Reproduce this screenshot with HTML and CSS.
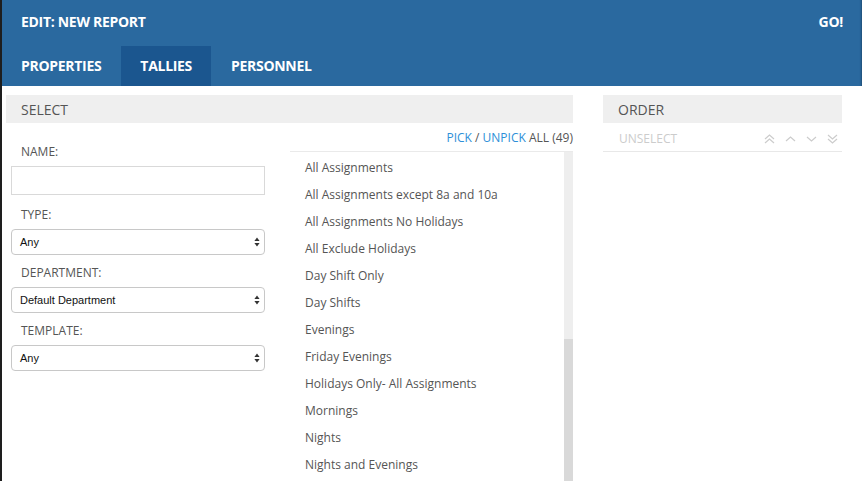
FILE: index.html
```html
<!DOCTYPE html>
<html>
<head>
<meta charset="utf-8">
<link rel="stylesheet" href="styles.css">
</head>
<body>
<div class="app">
  <header class="topbar">
    <div class="titlerow">
      <span class="title">EDIT: NEW REPORT</span>
      <span class="go">GO!</span>
    </div>
    <nav class="tabs">
      <span class="tab">PROPERTIES</span>
      <span class="tab active">TALLIES</span>
      <span class="tab">PERSONNEL</span>
    </nav>
  </header>
  <main class="content">
    <section class="panel select-panel">
      <div class="panel-head">SELECT</div>
      <div class="select-body">
        <div class="filters">
          <label class="flabel first">NAME:</label>
          <div class="textbox"></div>
          <label class="flabel after-input">TYPE:</label>
          <div class="sel"><span>Any</span><svg class="updown" width="6" height="10" viewBox="0 0 6 10"><path d="M3 0.5 L5.6 4 H0.4 Z M3 9.5 L5.6 6 H0.4 Z" fill="#333"/></svg></div>
          <label class="flabel">DEPARTMENT:</label>
          <div class="sel"><span>Default Department</span><svg class="updown" width="6" height="10" viewBox="0 0 6 10"><path d="M3 0.5 L5.6 4 H0.4 Z M3 9.5 L5.6 6 H0.4 Z" fill="#333"/></svg></div>
          <label class="flabel">TEMPLATE:</label>
          <div class="sel"><span>Any</span><svg class="updown" width="6" height="10" viewBox="0 0 6 10"><path d="M3 0.5 L5.6 4 H0.4 Z M3 9.5 L5.6 6 H0.4 Z" fill="#333"/></svg></div>
        </div>
        <div class="picker">
          <div class="pickrow"><a class="lnk">PICK</a>&nbsp;/&nbsp;<a class="lnk">UNPICK</a>&nbsp;ALL (49)</div>
          <div class="listwrap">
            <ul class="items">
              <li>All Assignments</li>
              <li>All Assignments except 8a and 10a</li>
              <li>All Assignments No Holidays</li>
              <li>All Exclude Holidays</li>
              <li>Day Shift Only</li>
              <li>Day Shifts</li>
              <li>Evenings</li>
              <li>Friday Evenings</li>
              <li>Holidays Only- All Assignments</li>
              <li>Mornings</li>
              <li>Nights</li>
              <li>Nights and Evenings</li>
            </ul>
            <div class="scrollbar"><div class="thumb"></div></div>
          </div>
        </div>
      </div>
    </section>
    <section class="panel order-panel">
      <div class="panel-head">ORDER</div>
      <div class="orderbar">
        <span class="unselect">UNSELECT</span>
        <span class="arrows">
          <svg width="11" height="10" viewBox="0 0 11 10"><path d="M1 5 L5.5 1 L10 5 M1 9 L5.5 5 L10 9" fill="none" stroke="#ccc" stroke-width="1.2"/></svg>
          <svg width="11" height="10" viewBox="0 0 11 10"><path d="M1 7 L5.5 3 L10 7" fill="none" stroke="#ccc" stroke-width="1.2"/></svg>
          <svg width="11" height="10" viewBox="0 0 11 10"><path d="M1 3 L5.5 7 L10 3" fill="none" stroke="#ccc" stroke-width="1.2"/></svg>
          <svg width="11" height="10" viewBox="0 0 11 10"><path d="M1 1 L5.5 5 L10 1 M1 5 L5.5 9 L10 5" fill="none" stroke="#ccc" stroke-width="1.2"/></svg>
        </span>
      </div>
    </section>
  </main>
</div>
</body>
</html>
```
FILE: styles.css
```css
* { box-sizing: border-box; }
html, body { margin: 0; padding: 0; }
body {
  width: 862px;
  height: 481px;
  overflow: hidden;
  background: #fff;
  font-family: "Open Sans", "DejaVu Sans", sans-serif;
}
.app {
  height: 481px;
  border-left: 2px solid #1e1e1e;
  overflow: hidden;
}
.topbar {
  background: #2a699f;
  color: #fff;
  font-weight: 700;
  font-size: 14px;
  box-shadow: inset -3px 0 2px -2px rgba(0,0,0,0.25);
}
.titlerow {
  height: 46px;
  display: flex;
  align-items: center;
  justify-content: space-between;
  padding: 0 19px 4px 19px;
  letter-spacing: -0.3px;
}
.tabs {
  display: flex;
  height: 40px;
}
.tab {
  display: flex;
  align-items: center;
  padding: 0 19px 2px 19px;
  letter-spacing: -0.3px;
}
.tab.active { background: #1b568f; }
.tabs .tab:first-child { padding-right: 20px; }
.tabs .tab:last-child { padding-left: 20px; }

.content {
  display: flex;
  padding: 9px 20px 0 4px;
  gap: 30px;
}
.panel-head {
  background: #efefef;
  height: 28px;
  display: flex;
  align-items: center;
  padding-left: 15px;
  font-size: 14px;
  color: #555;
}
.select-panel { width: 567px; }
.order-panel { width: 239px; }

.select-body {
  display: flex;
  gap: 25px;
  padding-left: 5px;
}
.filters {
  width: 254px;
  padding-top: 21px;
  display: flex;
  flex-direction: column;
}
.flabel {
  display: block;
  font-size: 12px;
  line-height: 16px;
  color: #555;
  padding-left: 10px;
  margin: 10px 0 6px;
}
.flabel.first { margin-top: 0; }
.flabel.after-input { margin-top: 12px; }
.textbox {
  height: 29px;
  border: 1px solid #d9d9d9;
  background: #fff;
}
.sel {
  height: 26px;
  border: 1px solid #c8c8c8;
  border-radius: 4px;
  display: flex;
  align-items: center;
  justify-content: space-between;
  padding: 0 4px 0 8px;
  font-family: "Liberation Sans", Arial, sans-serif;
  font-size: 11px;
  color: #111;
  background: #fff;
}
.updown { display: block; }

.picker { flex: 1; }
.pickrow {
  height: 28px;
  display: flex;
  align-items: center;
  justify-content: flex-end;
  font-size: 12px;
  color: #555;
}
.lnk { color: #2d8fd8; }
.listwrap {
  border-top: 1px solid #eaeaea;
  display: flex;
  height: 340px;
  overflow: hidden;
}
.items {
  list-style: none;
  margin: 0;
  padding: 2px 0 0 15px;
  flex: 1;
}
.items li {
  height: 27px;
  display: flex;
  align-items: center;
  font-size: 12px;
  color: #555;
}
.scrollbar {
  width: 9px;
  background: #eeeeee;
  padding-top: 187px;
}
.thumb {
  height: 200px;
  background: #d9d9d9;
}

.orderbar {
  height: 29px;
  border-bottom: 1px solid #e8e8e8;
  display: flex;
  align-items: center;
  justify-content: space-between;
  padding: 3px 4px 0 16px;
  font-size: 12px;
  color: #ccc;
}
.arrows {
  display: flex;
  gap: 10px;
}
.arrows svg { display: block; }
```
